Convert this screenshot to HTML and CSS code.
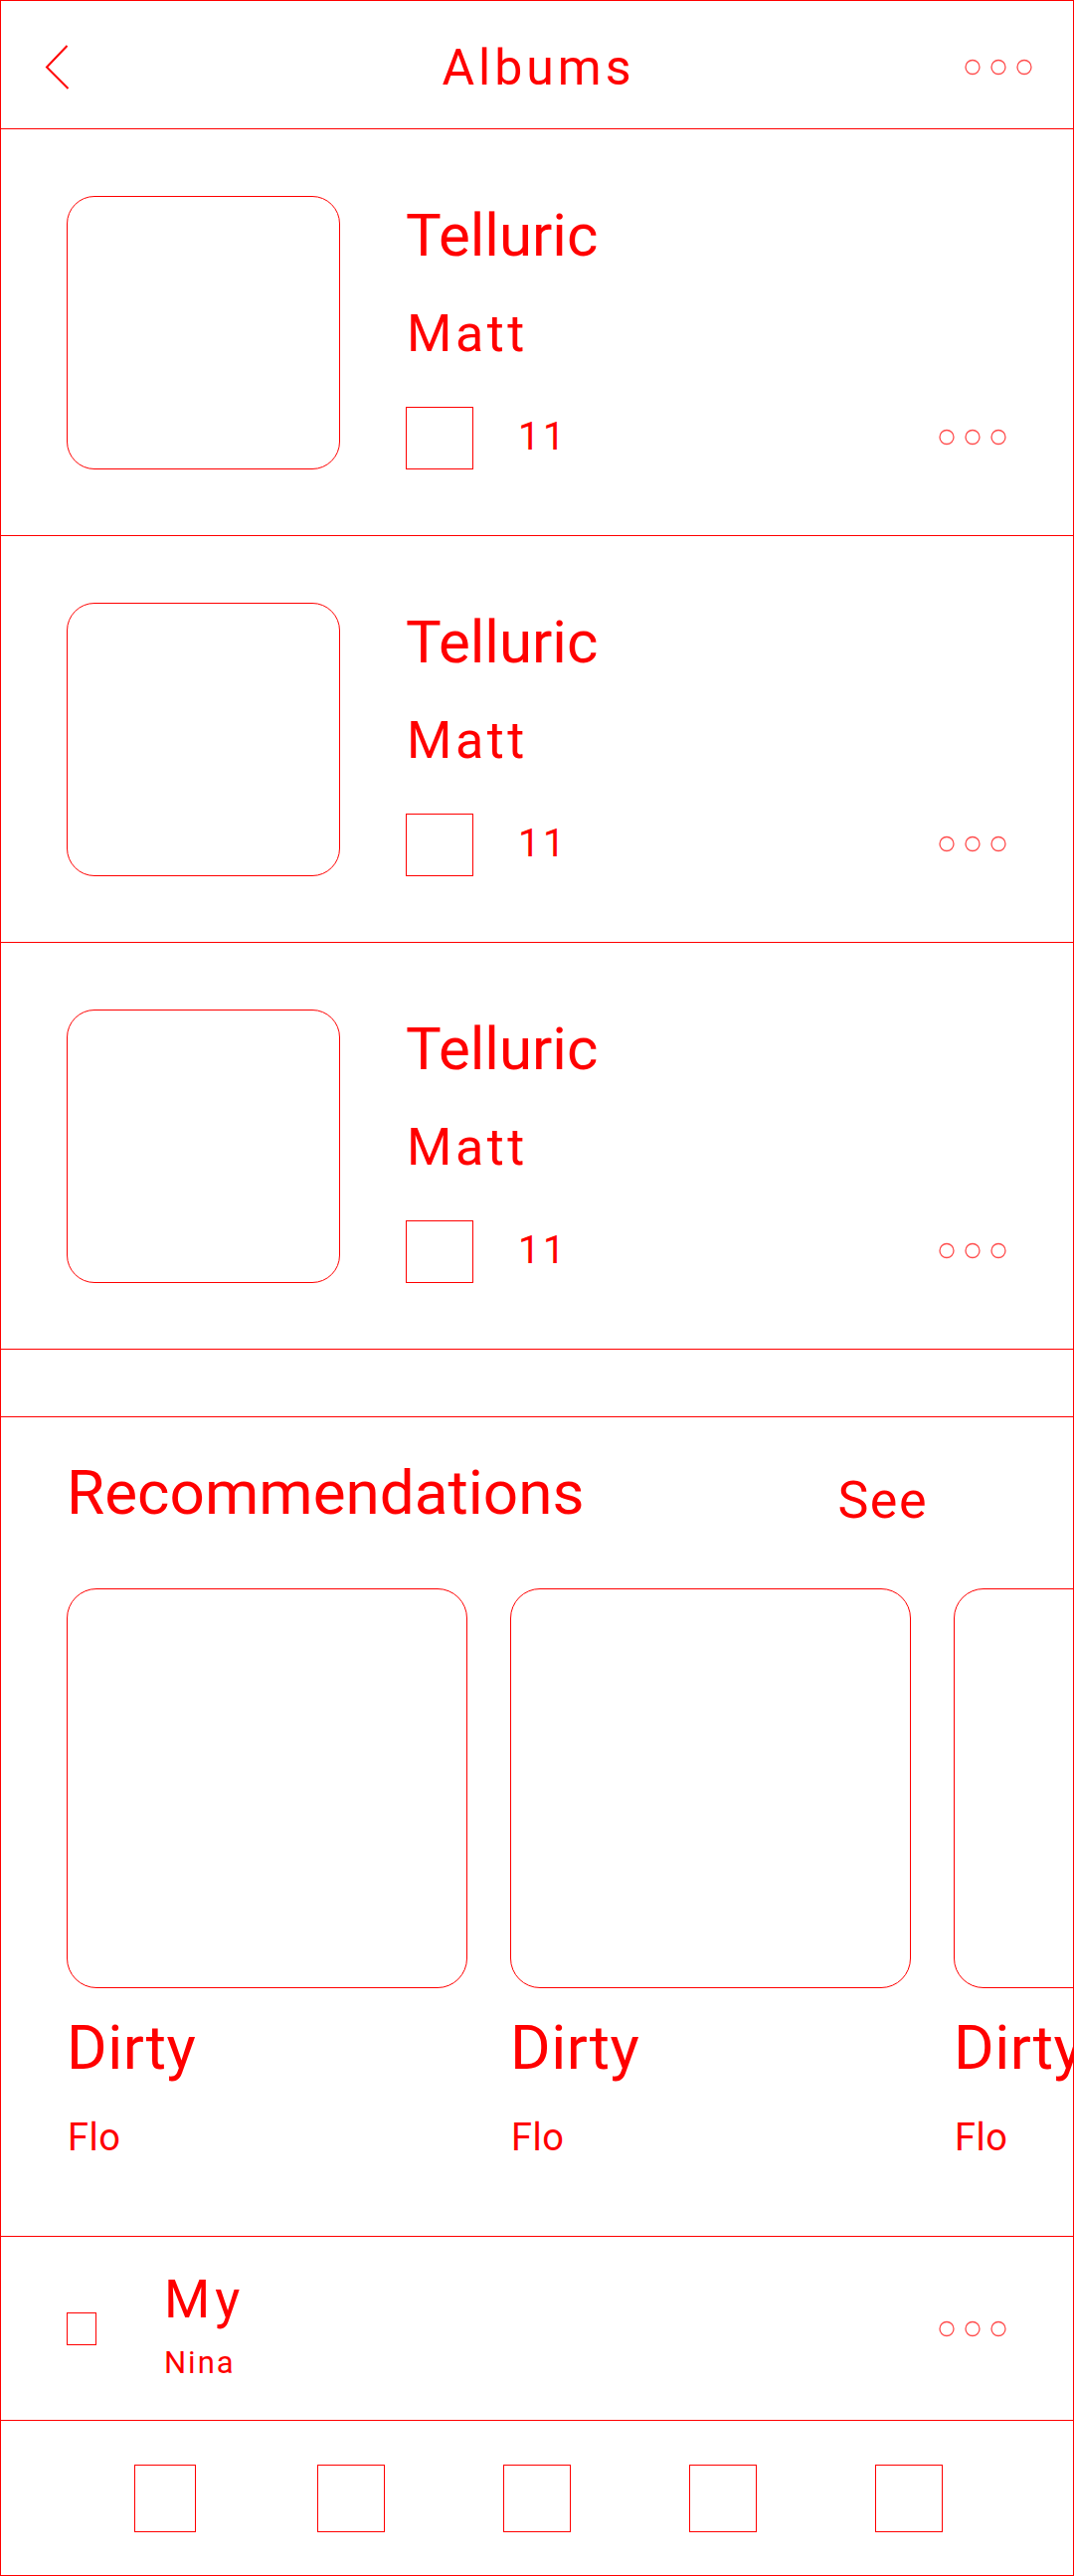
FILE: index.html
```html
<!DOCTYPE html>
<html lang="en">
<head>
    <meta charset="UTF-8">
    <meta name="viewport" content="width=device-width, initial-scale=1.0">
    <title>Albums</title>
    <link rel="stylesheet" href="styles.css">
</head>
<body>

    <header class="topbar">
        <div class="topbar-left">
            <svg class="back" width="26" height="48" viewBox="0 0 26 48">
                <polyline points="22.5,2 2,23.5 23.5,45" fill="none" stroke="#ff0000" stroke-width="2"/>
            </svg>
        </div>
        <h1 class="topbar-title">Albums</h1>
        <div class="topbar-right">
            <svg class="dots" width="68" height="17" viewBox="0 0 68 17">
                <circle cx="8" cy="8.5" r="7"/>
                <circle cx="34" cy="8.5" r="7"/>
                <circle cx="60" cy="8.5" r="7"/>
            </svg>
        </div>
    </header>

    <section class="albums">
        <div class="album-row">
            <div class="album-art"></div>
            <div class="album-info">
                <div class="album-title">Telluric</div>
                <div class="album-artist">Matt</div>
                <div class="album-meta">
                    <span class="track-box"></span>
                    <span class="track-count">11</span>
                    <svg class="dots" width="68" height="17" viewBox="0 0 68 17">
                        <circle cx="8" cy="8.5" r="7"/>
                        <circle cx="34" cy="8.5" r="7"/>
                        <circle cx="60" cy="8.5" r="7"/>
                    </svg>
                </div>
            </div>
        </div>

        <div class="album-row">
            <div class="album-art"></div>
            <div class="album-info">
                <div class="album-title">Telluric</div>
                <div class="album-artist">Matt</div>
                <div class="album-meta">
                    <span class="track-box"></span>
                    <span class="track-count">11</span>
                    <svg class="dots" width="68" height="17" viewBox="0 0 68 17">
                        <circle cx="8" cy="8.5" r="7"/>
                        <circle cx="34" cy="8.5" r="7"/>
                        <circle cx="60" cy="8.5" r="7"/>
                    </svg>
                </div>
            </div>
        </div>

        <div class="album-row">
            <div class="album-art"></div>
            <div class="album-info">
                <div class="album-title">Telluric</div>
                <div class="album-artist">Matt</div>
                <div class="album-meta">
                    <span class="track-box"></span>
                    <span class="track-count">11</span>
                    <svg class="dots" width="68" height="17" viewBox="0 0 68 17">
                        <circle cx="8" cy="8.5" r="7"/>
                        <circle cx="34" cy="8.5" r="7"/>
                        <circle cx="60" cy="8.5" r="7"/>
                    </svg>
                </div>
            </div>
        </div>
    </section>

    <div class="spacer"></div>

    <section class="recs">
        <div class="recs-head">
            <h2 class="recs-title">Recommendations</h2>
            <span class="recs-see">See</span>
        </div>
        <div class="recs-list">
            <div class="rec">
                <div class="rec-art"></div>
                <div class="rec-title">Dirty</div>
                <div class="rec-artist">Flo</div>
            </div>
            <div class="rec">
                <div class="rec-art"></div>
                <div class="rec-title">Dirty</div>
                <div class="rec-artist">Flo</div>
            </div>
            <div class="rec">
                <div class="rec-art"></div>
                <div class="rec-title">Dirty</div>
                <div class="rec-artist">Flo</div>
            </div>
        </div>
    </section>

    <div class="now-playing">
        <span class="np-box"></span>
        <div class="np-text">
            <div class="np-title">My</div>
            <div class="np-artist">Nina</div>
        </div>
        <svg class="dots" width="68" height="17" viewBox="0 0 68 17">
            <circle cx="8" cy="8.5" r="7"/>
            <circle cx="34" cy="8.5" r="7"/>
            <circle cx="60" cy="8.5" r="7"/>
        </svg>
    </div>

    <nav class="tabbar">
        <span class="tab tab-first"></span>
        <span class="tab"></span>
        <span class="tab"></span>
        <span class="tab"></span>
        <span class="tab"></span>
    </nav>

</body>
</html>
```

FILE: styles.css
```css
/* General reset */
* {
    margin: 0;
    padding: 0;
    box-sizing: border-box;
    font-family: Roboto, "Liberation Sans", sans-serif;
}

body {
    width: 1080px;
    height: 2590px;
    border: 1px solid #ff0000;
    background-color: #fff;
    color: #ff0000;
    overflow: hidden;
}

.dots {
    display: block;
    fill: none;
    stroke: #ff4d4d;
    stroke-width: 1.3;
}

/* Top bar */
.topbar {
    display: grid;
    grid-template-columns: 1fr auto 1fr;
    align-items: center;
    height: 129px;
    padding: 5px 41px 0 44px;
    border-bottom: 1px solid #ff0000;
}

.back {
    display: block;
}

.topbar-title {
    font-size: 50px;
    font-weight: 400;
    line-height: 1;
    letter-spacing: 4px;
}

.topbar-right {
    display: flex;
    justify-content: flex-end;
}

/* Album list */
.album-row {
    display: flex;
    height: 409px;
    padding: 67px 67px 0 66px;
    border-bottom: 1px solid #ff0000;
}

.album-art {
    width: 275px;
    height: 275px;
    flex-shrink: 0;
    border: 1px solid #ff0000;
    border-radius: 28px;
}

.album-info {
    flex: 1;
    display: flex;
    flex-direction: column;
    margin-left: 66px;
    height: 275px;
}

.album-title {
    margin-top: 10px;
    font-size: 60px;
    line-height: 1;
}

.album-artist {
    margin-top: 43px;
    margin-left: 1px;
    font-size: 52px;
    line-height: 1;
    letter-spacing: 3.5px;
}

.album-meta {
    display: flex;
    align-items: center;
    margin-top: 47px;
}

.track-box {
    width: 68px;
    height: 63px;
    border: 1px solid #ff0000;
}

.track-count {
    margin-left: 45px;
    margin-top: -3px;
    font-size: 39px;
    line-height: 1;
    letter-spacing: 3px;
}

.album-meta .dots {
    margin-left: auto;
    margin-top: -3px;
}

.spacer {
    height: 68px;
    border-bottom: 1px solid #ff0000;
}

/* Recommendations */
.recs {
    padding: 45px 0 72px 66px;
    border-bottom: 1px solid #ff0000;
}

.recs-head {
    display: flex;
    align-items: flex-start;
    padding-right: 146px;
}

.recs-title {
    font-size: 62px;
    font-weight: 400;
    line-height: 1;
}

.recs-see {
    margin-left: auto;
    margin-top: 13px;
    font-size: 52px;
    line-height: 1;
    letter-spacing: 1.5px;
}

.recs-list {
    display: flex;
    gap: 43px;
    margin-top: 62px;
    padding-bottom: 8px;
    overflow: hidden;
}

.rec {
    flex-shrink: 0;
    width: 403px;
}

.rec-art {
    width: 403px;
    height: 402px;
    border: 1px solid #ff0000;
    border-radius: 30px;
}

.rec-title {
    margin-top: 29px;
    font-size: 62px;
    line-height: 1;
    letter-spacing: 0.5px;
}

.rec-artist {
    margin-top: 40px;
    margin-left: 1px;
    font-size: 38px;
    line-height: 1;
    letter-spacing: 0.5px;
}

/* Now playing */
.now-playing {
    display: flex;
    align-items: center;
    height: 185px;
    padding: 0 67px 0 66px;
    border-bottom: 1px solid #ff0000;
}

.np-box {
    width: 30px;
    height: 33px;
    border: 1px solid #ff0000;
}

.np-text {
    margin-left: 68px;
    margin-bottom: 6px;
}

.np-title {
    font-size: 53px;
    line-height: 1;
    letter-spacing: 5px;
}

.np-artist {
    margin-top: 21px;
    font-size: 31px;
    line-height: 1;
    letter-spacing: 2px;
}

.now-playing .dots {
    margin-left: auto;
}

/* Tab bar */
.tabbar {
    display: grid;
    grid-template-columns: repeat(5, 187px);
    justify-content: center;
    justify-items: center;
    align-items: center;
    height: 156px;
}

.tab {
    width: 68px;
    height: 68px;
    border: 1px solid #ff0000;
}

.tab-first {
    width: 62px;
}
```
